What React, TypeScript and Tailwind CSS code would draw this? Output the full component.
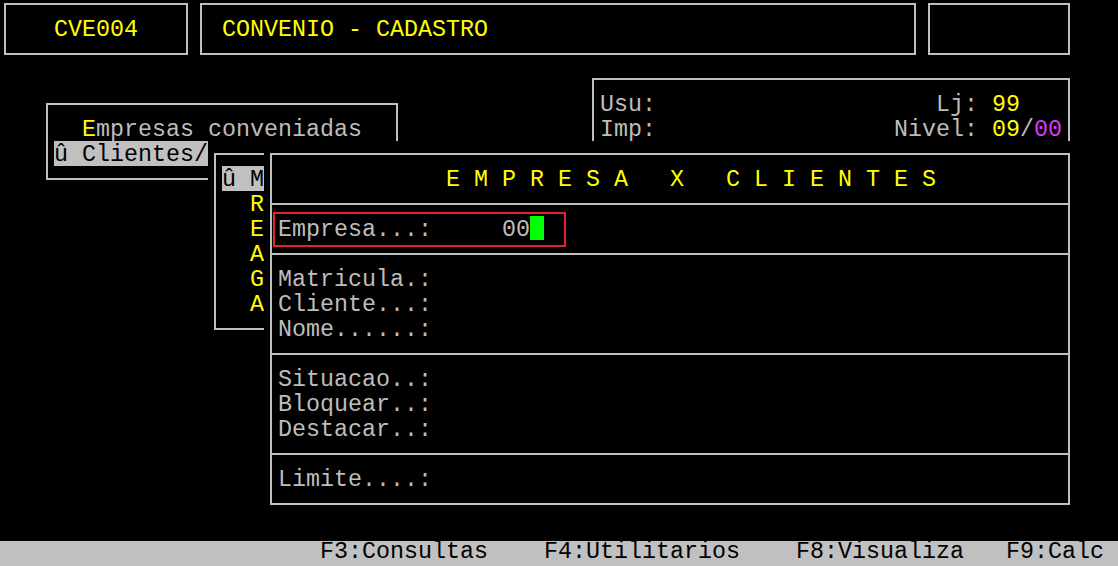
import React from "react";

const Y = "text-[#ffff00]";
const HL = "inline-block align-top h-[25px] bg-[#c0c0c0] text-black";

export default function App() {
  return (
    <div className="relative w-[1118px] h-[566px] bg-black overflow-hidden flex flex-col font-['Liberation_Mono',monospace] text-[23.333px] leading-[29px] text-[#bdbdbd] whitespace-pre">
      {/* header boxes */}
      <div className="flex gap-[12px] pl-[4px] pt-[3px]">
        <div className={`w-[184px] h-[52px] border-2 border-[#c0c0c0] pt-[11px] pl-[48px] ${Y}`}>
          <div className="h-[25px]">CVE004</div>
        </div>
        <div className={`w-[716px] h-[52px] border-2 border-[#c0c0c0] pt-[11px] pl-[20px] ${Y}`}>
          <div className="h-[25px]">CONVENIO - CADASTRO</div>
        </div>
        <div className="w-[142px] h-[52px] border-2 border-[#c0c0c0]"></div>
      </div>

      <div className="flex-1"></div>

      {/* function key bar */}
      <div className="h-[25px] bg-[#c0c0c0] text-black pl-[320px] leading-[23px]">
        {"F3:Consultas    F4:Utilitarios    F8:Visualiza   F9:Calc"}
      </div>

      {/* Empresas conveniadas menu window */}
      <div className="absolute left-[46px] top-[103px] w-[352px] h-[77px] border-2 border-[#c0c0c0] pt-[11px]">
        <div className="h-[25px] pl-[34px]">
          <span className={Y}>E</span>mpresas conveniadas
        </div>
        <div className="h-[25px] pl-[6px]">
          <span className={HL}>û Clientes/</span>
        </div>
      </div>

      {/* Usuario window */}
      <div className="absolute left-[592px] top-[78px] w-[478px] h-[90px] border-2 border-[#c0c0c0] pt-[11px] pl-[6px]">
        <div className="h-[25px]">
          {"Usu:                    Lj: "}
          <span className={Y}>99</span>
        </div>
        <div className="h-[25px]">
          {"Imp:                 Nivel: "}
          <span className={Y}>09</span>/<span className="text-[#d838ff]">00</span>
        </div>
      </div>

      {/* submenu window */}
      <div className="absolute left-[208px] top-[141px] w-[56px] h-[200px] bg-black overflow-hidden">
        <div className="ml-[6px] mt-[12px] h-[177px] w-[60px] border-l-2 border-t-2 border-b-2 border-[#c0c0c0] pt-[11px] pl-[6px]">
          <div className="h-[25px]">
            <span className={HL}>û M</span>
          </div>
          {["R", "E", "A", "G", "A"].map((l, i) => (
            <div key={i} className="h-[25px]">
              {"  "}
              <span className={Y}>{l}</span>
            </div>
          ))}
        </div>
      </div>

      {/* dialog window */}
      <div className="absolute left-[264px] top-[141px] w-[814px] h-[375px] bg-black">
        <div className="ml-[6px] mt-[12px] w-[800px] h-[352px] border-2 border-[#c0c0c0] flex flex-col">
          <div className="h-[50px] border-b-2 border-[#c0c0c0] pt-[11px] pl-[174px]">
            <div className={`h-[25px] ${Y}`}>{"E M P R E S A   X   C L I E N T E S"}</div>
          </div>
          <div className="h-[50px] border-b-2 border-[#c0c0c0] pt-[11px] pl-[6px]">
            <div className="flex items-start h-[25px]">
              <span>{"Empresa...:     00"}</span>
              <div className="w-[14px] h-[24px] bg-[#00ff00]"></div>
            </div>
          </div>
          <div className="h-[100px] border-b-2 border-[#c0c0c0] pt-[11px] pl-[6px]">
            <div className="h-[25px]">Matricula.:</div>
            <div className="h-[25px]">Cliente...:</div>
            <div className="h-[25px]">Nome......:</div>
          </div>
          <div className="h-[100px] border-b-2 border-[#c0c0c0] pt-[11px] pl-[6px]">
            <div className="h-[25px]">Situacao..:</div>
            <div className="h-[25px]">Bloquear..:</div>
            <div className="h-[25px]">Destacar..:</div>
          </div>
          <div className="h-[48px] pt-[11px] pl-[6px]">
            <div className="h-[25px]">Limite....:</div>
          </div>
        </div>
      </div>

      {/* red highlight annotation */}
      <div className="absolute left-[273px] top-[212px] w-[293px] h-[35px] border-2 border-[#e5222b]"></div>
    </div>
  );
}
